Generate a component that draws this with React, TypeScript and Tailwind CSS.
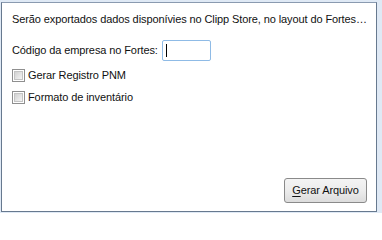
import React from 'react';

const Checkbox = ({ label }: { label: string }) => (
  <label className="flex items-center h-[13px] gap-[3px]">
    <span className="w-[13px] h-[13px] border border-[#8f8f8f] bg-white p-px shrink-0">
      <span className="block w-full h-full bg-gradient-to-br from-[#d2d2d2] to-[#f4f4f4] border border-[#c4c4c4]" />
    </span>
    <span className="leading-[13px]">{label}</span>
  </label>
);

const App = () => {
  return (
    <div className="w-[382px] h-[213px] bg-[#dfe9f5] pt-[2px] pl-[1px] pr-[5px] pb-[1px] text-[11px] tracking-[-0.1px] text-[#111] [font-family:'Liberation_Sans',Arial,sans-serif]">
      <div className="h-full border border-[#67798f] border-t-[#8a9ab0] bg-white flex flex-col pl-[10px] pr-[9px] pt-[10px] pb-[8px]">
        <p className="leading-[13px] whitespace-nowrap">
          Serão exportados dados disponívies no Clipp Store, no layout do Fortes…
        </p>

        <div className="flex items-center mt-[14px]">
          <span className="w-[150px] leading-[13px] whitespace-nowrap">Código da empresa no Fortes:</span>
          <div className="w-[49px] h-[21px] border border-[#8fbbe6] rounded-[2px] bg-white flex items-center pl-[3px]">
            <span className="w-px h-[13px] bg-black" />
          </div>
        </div>

        <div className="mt-[8px] flex flex-col gap-[9px]">
          <Checkbox label="Gerar Registro PNM" />
          <Checkbox label="Formato de inventário" />
        </div>

        <div className="mt-auto flex justify-end">
          <button className="w-[83px] h-[25px] border border-[#8a8a8a] rounded-[3px] bg-gradient-to-b from-[#f4f4f4] via-[#ececec] to-[#dcdcdc] leading-[13px] text-[#111]">
            <span className="underline underline-offset-2">G</span>erar Arquivo
          </button>
        </div>
      </div>
    </div>
  );
};

export default App;
